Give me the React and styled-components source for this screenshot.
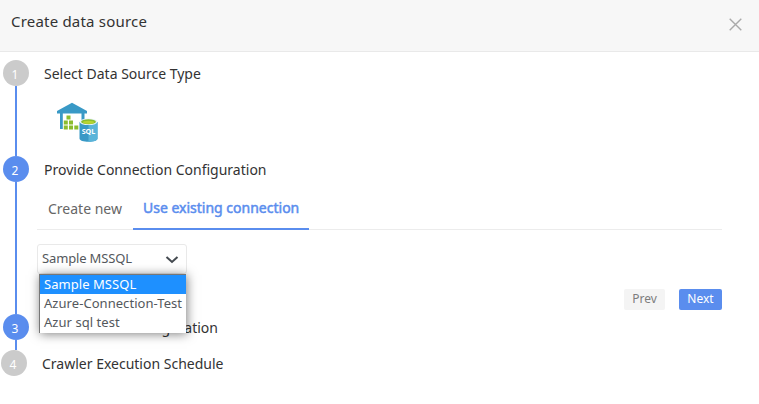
import React from 'react'
import styled, { createGlobalStyle } from 'styled-components'

const GlobalStyle = createGlobalStyle`
  * {
    box-sizing: border-box;
  }

  body {
    margin: 0;
    background: #fff;
    font-family: 'Noto Sans', sans-serif;
    color: #333;
    overflow: hidden;
  }
`

const Dialog = styled.div`
  width: 759px;
  height: 404px;
  background: #fff;
`

const Header = styled.header`
  display: flex;
  align-items: center;
  justify-content: space-between;
  height: 52px;
  padding: 0 17px 0 11px;
  background: #f7f7f7;
  border-bottom: 1px solid #e9e9e9;
`

const Title = styled.h1`
  margin: 0 0 10px;
  font-size: 15px;
  font-weight: 400;
  line-height: 20px;
  letter-spacing: 0.2px;
`

const CloseButton = styled.button`
  display: flex;
  padding: 0;
  margin-top: -3px;
  border: 0;
  background: none;
`

const Steps = styled.div`
  padding: 8px 37px 0 3px;
`

const Step = styled.section`
  display: flex;
  height: ${({ $height }) => $height}px;
  margin-left: ${({$shift}) => $shift || 0}px;
`

const Rail = styled.div`
  display: flex;
  flex-direction: column;
  align-items: center;
  width: 26px;
  flex-shrink: 0;
`

const Circle = styled.span`
  width: 26px;
  height: 26px;
  flex-shrink: 0;
  padding-right: 2px;
  border-radius: 50%;
  background: ${({ $active }) => ($active ? '#5a8dee' : '#cbcbcb')};
  color: #fff;
  font-size: 12px;
  line-height: 29px;
  text-align: center;
`

const Line = styled.span`
  width: 2px;
  flex: 1;
  background: #5a8dee;
`

const StepBody = styled.div`
  flex: 1;
  padding-left: 8px;
`

const StepTitle = styled.h2`
  margin: 0 0 0 7px;
  font-size: 14px;
  font-weight: 400;
  line-height: 28px;
`

const SourceIcon = styled.svg`
  display: block;
  margin: 14px 0 0 20px;
`

const Tabs = styled.div`
  display: flex;
  height: 35px;
  margin-top: 11px;
  border-bottom: 1px solid #ececec;
`

const Tab = styled.button`
  height: 35px;
  padding: 0 ${({ $active }) => ($active ? 10 : 11)}px ${({ $active }) => ($active ? 7 : 6)}px;
  border: 0;
  border-bottom: 2px solid ${({ $active }) => ($active ? '#5a8dee' : 'transparent')};
  background: none;
  color: ${({ $active }) => ($active ? '#5a8dee' : '#666')};
  font-family: inherit;
  font-size: 14px;
  line-height: 22px;
  white-space: nowrap;
  -webkit-text-stroke: ${({ $active }) => ($active ? '0.5px #5a8dee' : '0')};
`

const SelectWrap = styled.div`
  position: relative;
  width: 150px;
  margin-top: 14px;
`

const SelectBox = styled.div`
  display: flex;
  align-items: center;
  justify-content: space-between;
  height: 30px;
  padding: 0 7px 2px 4px;
  border: 1px solid #e9e9e9;
  border-radius: 3px;
  background: #fff;
  color: #54585c;
  font-size: 13px;
  letter-spacing: -0.15px;
`

const Chevron = styled.svg`
  margin-top: 3px;
`

const Options = styled.ul`
  position: absolute;
  z-index: 2;
  top: 30px;
  left: 2px;
  width: 147px;
  height: 59px;
  margin: 0;
  padding: 0;
  border-top: 1px solid #777;
  border-left: 1px solid #777;
  background: #fff;
  box-shadow: 1px 1px 10px rgba(0, 0, 0, 0.5);
  list-style: none;
`

const Option = styled.li`
  height: 19px;
  padding-left: 4px;
  background: ${({ $selected }) => ($selected ? '#1e90ff' : '#fff')};
  color: ${({ $selected }) => ($selected ? '#fff' : '#54585c')};
  font-size: 13px;
  line-height: 19px;
  letter-spacing: 0.05px;
  white-space: nowrap;
`

const Actions = styled.div`
  display: flex;
  justify-content: flex-end;
  gap: 14px;
  margin-top: 15px;
`

const Button = styled.button`
  width: ${({ $primary }) => ($primary ? 43 : 41)}px;
  height: 21px;
  padding: 0 0 2px;
  border: 0;
  border-radius: 2px;
  background: ${({ $primary }) => ($primary ? '#5a8dee' : '#f4f4f4')};
  color: ${({ $primary }) => ($primary ? '#fff' : '#7d7d7d')};
  font-family: inherit;
  font-size: 12px;
  line-height: 19px;
`

function SqlWarehouseIcon() {
  return (
    <SourceIcon width="42" height="41" viewBox="0 0 42 41">
      <path d="M0 9 15 .8 30 9v2.500H0z" fill="#3999c6" />
      <path d="M3 11h2.800v16H3zM24.500 11h3v7h-3z" fill="#3999c6" />
      <path
        d="M9.500 13.500h4v4h-4zM6.800 18.500h4v4h-4zM12 18.500h4v4h-4zM6.800 23.500h4v4h-4zM12 23.500h4v4h-4zM17.300 23.500h4v4h-4z"
        fill="#8bbd2e"
      />
      <path d="M22.500 20v16.500c0 2 4 3.300 9 3.300s9-1.300 9-3.300V20z" fill="#3999c6" />
      <path d="M31.500 20v19.800c5 0 9-1.300 9-3.300V20z" fill="#5ab4d9" />
      <ellipse cx="31.500" cy="19.800" rx="9" ry="3.300" fill="#e6f3f8" />
      <ellipse cx="31.500" cy="19.800" rx="7.400" ry="2.500" fill="#8bbd2e" />
      <ellipse cx="31.500" cy="20.300" rx="5.500" ry="1.500" fill="#b8d432" />
      <text
        x="31.500"
        y="32.300"
        fill="#fff"
        fontFamily="Noto Sans, sans-serif"
        fontSize="7.200"
        fontWeight="700"
        textAnchor="middle"
      >
        SQL
      </text>
    </SourceIcon>
  )
}

const options = ['Sample MSSQL', 'Azure-Connection-Test', 'Azur sql test']

function ConnectionSelect() {
  return (
    <SelectWrap>
      <SelectBox>
        {options[0]}
        <Chevron width="14" height="9" viewBox="0 0 14 9" fill="none">
          <path d="M1.500 2 7 7l5.500-5" stroke="#444a50" strokeWidth="2" />
        </Chevron>
      </SelectBox>
      <Options>
        {options.map((name, i) => (
          <Option key={name} $selected={i === 0}>{name}</Option>
        ))}
      </Options>
    </SelectWrap>
  )
}

export default function App() {
  return (
    <Dialog>
      <GlobalStyle />
      <Header>
        <Title>Create data source</Title>
        <CloseButton aria-label="Close">
          <svg width="13" height="13" viewBox="0 0 13 13">
            <path d="M.7.7l11.600 11.600M12.300.7.7 12.300" stroke="#aaa" strokeWidth="1.400" />
          </svg>
        </CloseButton>
      </Header>
      <Steps>
        <Step $height={96}>
          <Rail>
            <Circle>1</Circle>
            <Line />
          </Rail>
          <StepBody>
            <StepTitle>Select Data Source Type</StepTitle>
            <SqlWarehouseIcon />
          </StepBody>
        </Step>
        <Step $height={158}>
          <Rail>
            <Circle $active>2</Circle>
            <Line />
          </Rail>
          <StepBody>
            <StepTitle>Provide Connection Configuration</StepTitle>
            <Tabs>
              <Tab>Create new</Tab>
              <Tab $active>Use existing connection</Tab>
            </Tabs>
            <ConnectionSelect />
            <Actions>
              <Button>Prev</Button>
              <Button $primary>Next</Button>
            </Actions>
          </StepBody>
        </Step>
        <Step $height={36}>
          <Rail>
            <Circle $active>3</Circle>
            <Line />
          </Rail>
          <StepBody>
            <StepTitle>Data Source Configuration</StepTitle>
          </StepBody>
        </Step>
        <Step $height={26} $shift={-2}>
          <Rail>
            <Circle>4</Circle>
          </Rail>
          <StepBody>
            <StepTitle>Crawler Execution Schedule</StepTitle>
          </StepBody>
        </Step>
      </Steps>
    </Dialog>
  )
}
